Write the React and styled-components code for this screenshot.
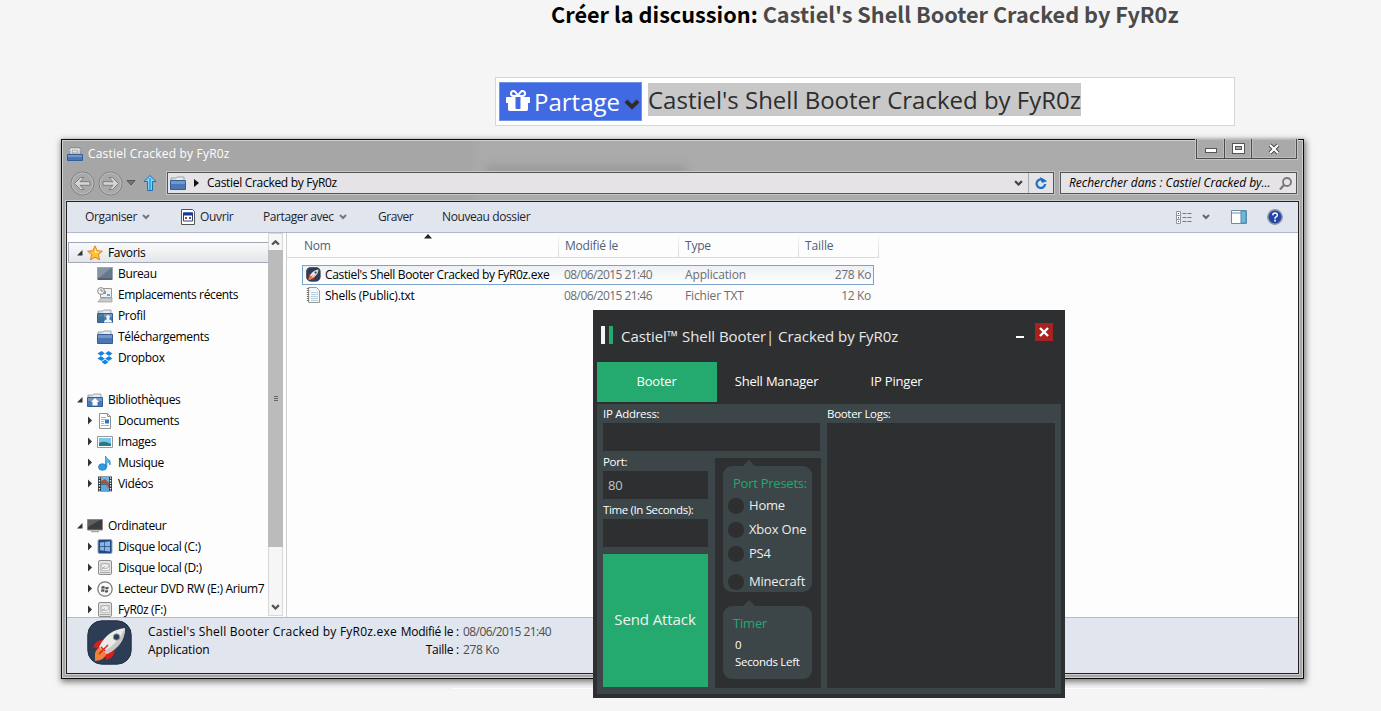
import React from "react";
import styled, { createGlobalStyle, css } from "styled-components";

const Global = createGlobalStyle`
  * { box-sizing: border-box; }
  html, body { margin: 0; padding: 0; }
  body {
    width: 1381px; height: 711px; overflow: hidden; background: #f5f5f5;
    font-family: "Open Sans", "Noto Sans", sans-serif; font-size: 12px; color: #000;
  }
  svg { display: block; flex: none; }
`;

const Desktop = styled.div`
  position: relative; width: 1381px; height: 711px; overflow: hidden; background: #f5f5f5;
`;
const Label = styled.span`
  white-space: pre; letter-spacing: ${(p) => p.$ls ?? -0.35}px;
  ${(p) => p.$size && css`font-size: ${p.$size}px;`}
  ${(p) => p.$up && css`margin-top: -2px;`}
`;

/* Forum page */
const Heading = styled.h1`
  margin: 0; padding-left: 551px; height: 77px; white-space: pre;
  font: 700 21.7px/27px "Noto Sans CJK JP", sans-serif; color: #000;
  span { color: #4a4a4a; }
`;
const TitleField = styled.div`
  margin-left: 495px; width: 740px; height: 49px; padding: 4px 3px; display: flex; align-items: flex-start;
  background: #fff; border: 1px solid #d6d6d6;
`;
const Tag = styled.div`
  width: 143px; height: 39px; display: flex; align-items: center; padding: 0 1px 0 6px;
  background: #4169e1; border: 1px solid #6f93e6; color: #fff; font-size: 24px;
  svg:first-child { margin-top: -1px; }
  svg:last-child { margin: 6px 0 0 auto; }
  span { margin-left: 4px; }
`;
const Selected = styled.span`
  margin: 1px 0 0 6px; width: 433px; height: 33px; line-height: 34px; background: #c8c8c8; color: #2d2d2d;
  font-size: 24px; white-space: pre;
`;
const PageRule = styled.div`
  position: absolute; left: 452px; top: 688px; width: 813px; height: 1px; background: #fff;
`;

/* Explorer */
const Explorer = styled.section`
  position: absolute; left: 61px; top: 139px; width: 1243px; height: 540px; padding: 0 4px 4px;
  display: flex; flex-direction: column; border: 1px solid #0c0c0c; background: #a6a6a6;
  box-shadow: inset 0 0 0 1px #cfcfcf, 1px 2px 6px 1px rgba(0,0,0,.5);
`;
const Glass = styled.div`
  position: absolute; left: 406px; top: 1px; right: 2px; height: 60px; overflow: hidden;
  background: linear-gradient(90deg, rgba(255,255,255,0), rgba(255,255,255,.05) 12px);
  &::after {
    content: ""; position: absolute; left: 18px; top: 25px; width: 200px; height: 8px;
    background: rgba(70,70,70,.2); filter: blur(4px);
  }
`;
const TitleBar = styled.header`
  position: relative; height: 27px; display: flex; align-items: center; gap: 5px; padding: 0 1px; color: #fff;
  flex: none;
`;
const Controls = styled.div`
  margin: -1px 1px 0 auto; align-self: flex-start; display: flex; height: 20px;
  border: 1px solid #4c4c4c; border-top: 0; box-shadow: 0 0 0 1px #c4c4c4; background: #a9a9a9;
`;
const Control = styled.div`
  width: ${(p) => p.$w}px; display: flex; align-items: center; justify-content: center;
  padding-top: ${(p) => p.$pt ?? 0}px;
  box-shadow: inset 0 0 0 1px #bdbdbd;
  & + & { border-left: 1px solid #4c4c4c; }
`;
const NavBar = styled.div`
  position: relative; height: 34px; display: flex; align-items: center; flex: none; padding: 0 2px 2px 4px;
`;
const NavButtons = styled.div`
  width: 97px; display: flex; align-items: center; gap: 3px;
  svg:nth-child(3) { margin-left: 0; }
  svg:nth-child(4) { margin-left: 4px; }
`;
const Box = styled.div`
  height: 22px; width: ${(p) => p.$w}px; display: flex; align-items: center; background: #e5e3e5;
  border: 1px solid #555; box-shadow: 0 0 0 1px #c6c6c6;
`;
const Address = styled(Box)`
  padding-left: 2px; gap: 8px; margin-right: 6px;
  > svg:nth-of-type(3) { margin-left: auto; margin-right: -3px; }
`;
const Refresh = styled.div`
  width: 25px; height: 20px; border-left: 1px solid #aaa; display: flex; align-items: center; justify-content: center;
`;
const Search = styled(Box)`
  padding: 0 4px 0 8px; justify-content: space-between; font-style: italic;
`;
const Client = styled.div`
  position: relative; flex: 1; min-height: 0; display: flex; flex-direction: column;
  border: 1px solid #222; box-shadow: 0 0 0 1px #cacaca; background: #fdfdfd;
`;
const Toolbar = styled.div`
  height: 31px; flex: none; display: flex; align-items: center; padding: 0 15px 0 18px; background: #e1e6ee;
  border-bottom: 1px solid #b2b8c6; color: #1e2430;
`;
const Tool = styled.div`
  width: ${(p) => p.$w}px; display: flex; align-items: center; gap: 5px;
`;
const Tools = styled.div`
  margin-left: auto; display: flex; align-items: center;
  svg:nth-child(2) { margin-left: 10px; }
  svg:nth-child(3) { margin-left: 21px; }
  svg:nth-child(4) { margin-left: 20px; }
`;
const Body = styled.div`
  height: 384px; flex: none; display: flex;
`;
const Tree = styled.nav`
  width: 201px; padding: 9px 0 0 1px; overflow: hidden;
`;
const TreeRow = styled.div`
  height: 21px; display: flex; align-items: center; padding-left: ${(p) => (p.$child ? 17 : 7)}px;
  overflow: hidden;
  margin-top: ${(p) => (p.$gap ? 21 : 0)}px;
  > svg:first-child { width: 9px; }
  > svg:nth-child(2) { margin: 0 5px 0 3px; }
  ${(p) => p.$active && css`
    border: 1px solid #a2a7b8; border-right: 0; padding-left: 6px;
    background: linear-gradient(#fafafb, #e4e6ea);
  `}
`;
const ScrollBar = styled.div`
  width: 15px; display: flex; flex-direction: column; margin-bottom: 1px; background: #f6f6f6; border: 1px solid #d8d8d8;
`;
const ScrollArrow = styled.div`
  height: 16px; display: flex; align-items: center; justify-content: center;
`;
const LastArrow = styled(ScrollArrow)` margin-top: auto; `;
const Thumb = styled.div`
  height: 297px; margin: 0 -1px; background: #bbb; display: flex; align-items: center; justify-content: center;
`;
const Files = styled.div`
  margin-left: 3px; flex: 1; border-left: 1px solid #d0d0d4;
`;
const Header = styled.div`
  position: relative; display: flex; width: 592px; height: 25px; border-bottom: 1px solid #dcdce0; color: #4c607a;
`;
const HeaderCell = styled.div`
  width: ${(p) => p.$w}px; padding-left: ${(p) => p.$pl ?? 6}px; line-height: 26px;
  border-right: 1px solid; border-image: linear-gradient(#fdfdfd, #d6d6da) 1;
`;
const SortMark = styled.svg`
  position: absolute; left: 137px; top: 1px;
`;
const FileRow = styled.div`
  width: 572px; height: ${(p) => (p.$active ? 20 : 22)}px; margin-left: 15px; display: flex; align-items: center;
  padding: 0 2px 0 3px; border: 1px solid transparent; color: #6d6d6d;
  ${(p) => p.$active && css`
    margin-top: 7px; border-color: #7da2ce; background: linear-gradient(#edf0f5, #fff);
  `}
`;
const FileName = styled.div`
  width: 258px; display: flex; gap: 4px; align-items: center; color: #000;
  svg { margin-top: -2px; }
`;
const FileCell = styled.div`
  width: ${(p) => p.$w}px; text-align: ${(p) => p.$align ?? "left"}; white-space: nowrap; margin-top: -2px;
`;
const Details = styled.footer`
  flex: 1; display: flex; background: #e1e5ee; border-top: 1px solid #b7bac6; padding: 2px 0 0 20px;
`;
const DetailColumn = styled.div`
  width: ${(p) => p.$w}px; line-height: 18px; padding-top: 3px; text-align: ${(p) => p.$align}; white-space: nowrap;
  margin-left: ${(p) => p.$ml ?? 0}px; color: ${(p) => p.$c ?? "#000"};
  span { display: block; }
`;

/* Booter window */
const Booter = styled.section`
  position: absolute; left: 593px; top: 310px; width: 472px; height: 388px; padding: 0 4px;
  background: #2e2f31; color: #fff;
`;
const BooterTitle = styled.header`
  height: 52px; display: flex; align-items: flex-start; padding: 13px 8px 0 4px; color: #e8e8e8; line-height: 26px;
`;
const Stripe = styled.i`
  width: 4px; height: 18px; margin: 3px 4px 0 0; background: ${(p) => p.$c};
`;
const BooterName = styled(Label)` margin-left: 4px; font-size: 15px; `;
const Minimize = styled.i`
  width: 8px; height: 2px; margin: 13px 11px 0 auto; background: #fff;
`;
const Close = styled.div`
  width: 18px; height: 18px; background: #a82222; display: flex; align-items: center; justify-content: center;
`;
const Tabs = styled.div` display: flex; height: 42px; `;
const Tab = styled.div`
  width: 120px; height: 40px; line-height: 39px; text-align: center; padding-right: 1px;
  background: ${(p) => (p.$active ? "#24a96e" : "transparent")};
`;
const Panel = styled.div`
  height: 290px; padding: 0 6px; display: flex; gap: 7px; background: #3c4547;
`;
const FormColumn = styled.div` width: 217px; `;
const LogColumn = styled.div` width: 228px; `;
const Split = styled.div` display: flex; gap: 7px; `;
const Fields = styled.div` width: 105px; flex: none; `;
const FieldLabel = styled.div` height: ${(p) => p.$h ?? 20}px; line-height: ${(p) => (p.$h ? 20 : 21)}px; white-space: nowrap; `;
const Input = styled.div`
  height: ${(p) => p.$h ?? 28}px; padding-left: 5px; line-height: 28px; background: #2e2f31; color: #c4c4c4;
`;
const Send = styled.button`
  display: block; width: 105px; height: 133px; margin: 7px 0 0; padding: 0 1px 3px 0; border: 0; background: #24a96e;
  color: #f2f2f2; font: 15px "Open Sans", sans-serif;
`;
const Group = styled.div`
  flex: none; width: 106px; height: 230px; margin-top: 7px; padding: 8px; background: #2e2f31;
`;
const Card = styled.div`
  position: relative; width: 89px; height: ${(p) => p.$h}px; margin-bottom: 14px; border-radius: 9px; background: #3c4547;
  padding: 8px 0 0 5px;
  &::before {
    content: ""; position: absolute; left: 20px; top: -6px;
    border: 6px solid transparent; border-top: 0; border-bottom-color: #3c4547;
  }
`;
const CardTitle = styled.div`
  margin-left: 5px; height: 18px; line-height: 19px; color: #24a96e; white-space: nowrap;
`;
const Radio = styled.div`
  display: flex; align-items: center; gap: 5px; height: 17px; margin-top: ${(p) => p.$mt}px; color: #ececec;
  white-space: nowrap;
  &::before { content: ""; flex: none; width: 16px; height: 16px; border-radius: 50%; background: #2e2f31; }
`;
const TimerLine = styled.div`
  margin: ${(p) => p.$mt ?? 0}px 0 0 7px; height: 17px; line-height: 17px; white-space: nowrap;
`;
const Field = (p) => <Label $size={11.5} $ls={-0.3} {...p} />;
const Text13 = (p) => <Label $size={13} $ls={-0.2} {...p} />;

/* Icons */
const Gift = () => (
  <svg width="24" height="28" viewBox="0 0 1536 1792">
    <path fill="#fff" d="M928 1356v-716h-320v716q0 25 18 38.500t46 13.500h192q28 0 46-13.500t18-38.500zm-456-844h195l-126-161q-26-31-69-31-40 0-68 28t-28 68 28 68 68 28zm688-96q0-40-28-68t-68-28q-43 0-69 31l-125 161h194q40 0 68-28t28-68zm376 256v320q0 14-9 23t-23 9h-96v416q0 40-28 68t-68 28h-1088q-40 0-68-28t-28-68v-416h-96q-14 0-23-9t-9-23v-320q0-14 9-23t23-9h440q-93 0-158.500-65.500t-65.500-158.500 65.500-158.500 158.500-65.500q107 0 168 77l128 165 128-165q61-77 168-77 93 0 158.500 65.500t65.500 158.500-65.500 158.500-158.500 65.500h440q14 0 23 9t9 23z" />
  </svg>
);
const Chevron = ({ w = 8, c = "#666", up, s = 2 }) => (
  <svg width={w} height={w * 0.75} viewBox="0 0 8 6">
    <path d={up ? "M1 5l3-3 3 3" : "M1 1l3 3 3-3"} fill="none" stroke={c} strokeWidth={s} />
  </svg>
);
const Folder = ({ children, doc }) => (
  <svg width="16" height="14" viewBox="0 0 16 14">
    <path d="M1 4V2h5l1-1h7v4z" fill="#e8ebee" stroke="#8b939c" strokeWidth=".8" />
    {doc && <path d="M3 1h10v6H3z" fill="#fff" stroke="#777" strokeWidth=".7" />}
    {doc && <path d="M5 3h6v3H5z" fill="#ddd" stroke="#888" strokeWidth=".7" />}
    <path d={doc ? "M.5 7.500h15v6H.5z" : "M.5 4.500h15v9H.5z"} fill="#4a78b4" stroke="#365e96" />
    <path d={doc ? "M1 8h14v2H1z" : "M1 5h14v3H1z"} fill="#7499c8" />
    {children}
  </svg>
);
const RoundArrow = ({ flip }) => (
  <svg width="25" height="25" viewBox="0 0 25 25">
    <circle cx="12.500" cy="12.500" r="11.500" fill="#a9a9a9" stroke="#808080" />
    <circle cx="12.500" cy="12.500" r="10.500" fill="none" stroke="#bdbdbd" />
    <path transform={flip ? "translate(25 0) scale(-1 1)" : undefined}
      d="M4.500 12.500l6-6h3.500l-4 4.200h10v3.600H10l4 4.200h-3.500z" fill="#d4d4d4" stroke="#777" strokeWidth=".9" />
  </svg>
);
const UpArrow = () => (
  <svg width="14" height="18" viewBox="0 0 14 18">
    <path d="M7 1.500l6 6H9.500v9h-5v-9H1z" fill="#7ed3f7" stroke="#1f6fa8" />
    <path d="M7 4v12" stroke="#2e9de0" strokeWidth="1.500" />
  </svg>
);
const Expand = ({ open }) => (
  <svg width="9" height="9" viewBox="0 0 9 9">
    {open ? <path d="M7.500 2v5.500H2z" fill="#333" /> : <path d="M3 .5v8l4-4z" fill="#333" />}
  </svg>
);
const Rocket = ({ size }) => (
  <svg width={size} height={size} viewBox="0 0 46 46">
    <rect x=".8" y=".8" width="43.400" height="43.400" rx="14" fill="#2c3d55" stroke="#223044" />
    <path d="M6 27q3-8 12-7l-6 9zM19 40l-1-8 9-6q2 8-3 12z" fill="#d81f1f" />
    <path d="M8 38q-1-9 6-11l6 6q-2 7-12 8z" fill="#f0803c" />
    <path d="M12 27Q20 10 38 8q0 17-18 26z" fill="#eceae8" />
    <path d="M38 8q0 17-18 26l-3-3Q31 24 38 8z" fill="#c9c6c6" />
    <circle cx="29.500" cy="17" r="3.200" fill="#2c3d55" stroke="#8a97a8" />
    <path d="M12 34l9-9M14 27l4 4" stroke="#d81f1f" strokeWidth="1.400" />
  </svg>
);
const icons = {
  star: <svg width="16" height="16" viewBox="0 0 16 16"><path d="M8 .8l2.100 4.900 5.300.5-4 3.500 1.200 5.200L8 12.200l-4.600 2.700 1.200-5.200-4-3.500 5.300-.5z" fill="#fdc13c" stroke="#e08424" /><path d="M8 3l1.300 3.500L13 7l-5 1z" fill="#fff0a8" /></svg>,
  desk: <svg width="16" height="14" viewBox="0 0 16 14"><path d="M.5.5h15v12H.5z" fill="#65788c" stroke="#9aa6b2" /><path d="M1 1h13L3 10H1z" fill="#8494a4" /><path d="M1 11h14v2H1z" fill="#56616c" /></svg>,
  recent: <svg width="16" height="16" viewBox="0 0 16 16"><path d="M3.500 1.500h11v9h-11z" fill="#eef1f3" stroke="#999" /><path d="M6 4h3v3H6zM10 7h3v2h-3z" fill="#5aa7dc" /><path d="M1 15l3-4h11v4z" fill="#c9cbcc" stroke="#999" strokeWidth=".7" /><circle cx="4" cy="4" r="3.400" fill="#f5f5f5" stroke="#888" /><path d="M4 2v2h2" stroke="#666" fill="none" strokeWidth=".8" /></svg>,
  profile: <Folder><path d="M1 5h6v8H1z" fill="#376f8c" opacity=".7" /><path d="M7 13.500v-1q1-2 3-2.200Q9 9 9.200 7.500 9.500 6 11 6t1.800 1.500Q13 9 12 10.300q2 .2 3 2.200v1z" fill="#f0f3f5" /></Folder>,
  folder: <Folder />,
  dropbox: <svg width="16" height="14" viewBox="0 0 16 14"><path d="M4.500 0L8 2.500 4 5 .5 2.500zM11.500 0L8 2.500 12 5l3.500-2.500zM.5 7.500L4 5l4 2.500L4.500 10zM15.500 7.500L12 5 8 7.500l3.500 2.500zM4.500 11L8 8.500l3.500 2.500L8 13.500z" fill="#1683e0" /><path d="M4 5l4-2.500L12 5 8 7.500z" fill="#fdfdfd" /></svg>,
  library: <Folder><path d="M8 5l4 4h-1.500v3.500h-5V9H4z" fill="#fff" /></Folder>,
  doc: <svg width="16" height="16" viewBox="0 0 16 16"><path d="M2.500.5h8l3 3v12h-11z" fill="#fff" stroke="#8c9298" /><path d="M10.500.5v3h3" fill="none" stroke="#8c9298" /><path d="M4 4.500h5M4 6.500h8M4 8.500h3M4 10.500h3M4 12.500h8" stroke="#9bb" /><path d="M8 7h4v3.500H8z" fill="#2878c8" /></svg>,
  image: <svg width="16" height="14" viewBox="0 0 16 14"><path d="M.5 1.500h15v11H.5z" fill="#fff" stroke="#999" /><path d="M2 3h12v8H2z" fill="#7cc6ee" /><path d="M2 8q5-3 12 1v2H2z" fill="#25806e" /><path d="M2 9.500h12V11H2z" fill="#2777a8" /></svg>,
  music: <svg width="16" height="16" viewBox="0 0 16 16"><ellipse cx="5.500" cy="12" rx="4" ry="3.300" fill="#2e9be4" stroke="#1f74b8" strokeWidth=".7" /><path d="M8.500 12V1q1 3 4 4 1.500 2 .5 5-.5-3-3-3.500V12z" fill="#55b4ee" stroke="#1f74b8" strokeWidth=".6" /></svg>,
  video: <svg width="16" height="16" viewBox="0 0 16 16"><path d="M1 .5h14v15H1z" fill="#2e3a44" /><path d="M4 1h8v6.500H4z" fill="#67b7e6" /><path d="M4 8.500h8V15H4z" fill="#5ba8e0" /><path d="M4 5l4-2 4 4v.5H4zM9 8.500h3v4z" fill="#a65438" /><path d="M2.500 1.500v14M13.500 1.500v14" stroke="#fff" strokeWidth="1.300" strokeDasharray="1.300 1.300" /></svg>,
  computer: <svg width="16" height="14" viewBox="0 0 16 14"><path d="M.5.5h15v10.500H.5z" fill="#3a3d40" stroke="#888" /><path d="M1 1h12L1 8z" fill="#5c6063" /><path d="M4 12.500h8" stroke="#aaa" strokeWidth="1.600" /></svg>,
  windows: <svg width="16" height="15" viewBox="0 0 16 15"><rect x="1" y=".5" width="14" height="14" rx="1.500" fill="#1f4a86" stroke="#8ea5c0" /><path d="M3 3.600l4.300-.6V7H3zM8 2.900l5-.7V7H8zM3 7.700h4.300v4.100L3 11.200zM8 7.700h5v4.900L8 12z" fill="#8fb2da" /></svg>,
  disk: <svg width="16" height="15" viewBox="0 0 16 15"><rect x="1.500" y=".5" width="13" height="14" rx="1.500" fill="#e4e4e4" stroke="#8d8d8d" /><path d="M3.500 3.500h9v7h-9z" fill="#f0f0f0" stroke="#b4b4b4" strokeWidth=".7" /><ellipse cx="8" cy="6" rx="4" ry="2.500" fill="none" stroke="#aaa" strokeWidth=".8" /><path d="M4 9.500l4-3M3 12.500h10" stroke="#999" strokeWidth=".8" /></svg>,
  dvd: <svg width="16" height="16" viewBox="0 0 16 16"><circle cx="8" cy="8" r="7.200" fill="#fafafa" stroke="#777" strokeWidth="1.200" /><path d="M4.500 5.500q2-1 3.200 0v2.300q-1.500-.8-3.500 0zM8.500 5.800q1.500.8 3.300 0l-.5 2.300q-1.500.8-3 0zM4.200 8.600q1.800-.8 3.300 0l-.3 2.300q-1.500-.8-3 0zM8.300 8.900q1.500.8 3 0l-.4 2.300q-1.500.8-3 0z" fill="#555" /></svg>,
  exe: <svg width="14" height="16" viewBox="0 0 14 16"><path d="M.5.5h11l2 2v13H.5z" fill="#fff" stroke="#555" /><path d="M2.500 4h9v8h-9z" fill="#fff" stroke="#345" /><path d="M2 3.500h10v3H2z" fill="#123a9c" /><path d="M4 8h2v2H4z" fill="#c33" /><path d="M8 8h2v2H8z" fill="#2a58c8" /></svg>,
  txt: <svg width="15" height="16" viewBox="0 0 15 16"><path d="M2.500.5h8l3 3v12h-11z" fill="#f5f7f8" stroke="#999" /><path d="M5 5.500h7M5 7.500h7M5 9.500h7M5 11.500h7M5 13.500h7" stroke="#b9d3e3" /><path d="M2 1v14" stroke="#777" strokeWidth="2.400" strokeDasharray="1 1" /></svg>,
};

const tree = [
  ["star", "Favoris", 0],
  ["desk", "Bureau", 1], ["recent", "Emplacements récents", 1], ["profile", "Profil", 1],
  ["folder", "Téléchargements", 1], ["dropbox", "Dropbox", 1],
  ["library", "Bibliothèques", 0], ["doc", "Documents", 2], ["image", "Images", 2],
  ["music", "Musique", 2], ["video", "Vidéos", 2],
  ["computer", "Ordinateur", 0], ["windows", "Disque local (C:)", 2], ["disk", "Disque local (D:)", 2],
  ["dvd", "Lecteur DVD RW (E:) Arium7", 2], ["disk", "FyR0z (F:)", 2],
];

export default function App() {
  return (
    <Desktop>
      <Global />
      <Heading>Créer la discussion: <span>Castiel's Shell Booter Cracked by FyR0z</span></Heading>
      <TitleField>
        <Tag><Gift /><Label $ls={0}>Partage</Label><Chevron w={16} c="#2d2d2d" /></Tag>
        <Selected>Castiel's Shell Booter Cracked by FyR0z</Selected>
      </TitleField>
      <PageRule />

      <Explorer>
        <Glass />
        <TitleBar>
          <Folder doc />
          <Label $ls={0.19}>Castiel Cracked by FyR0z</Label>
          <Controls>
            <Control $w={27} $pt={4}><svg width="12" height="6"><rect x=".5" y=".5" width="11" height="4" fill="#fff" stroke="#555" /></svg></Control>
            <Control $w={27}><svg width="13" height="11"><rect x=".5" y=".5" width="12" height="10" fill="#fff" stroke="#555" /><rect x="3.500" y="3.500" width="6" height="3" fill="#aaa" stroke="#555" /></svg></Control>
            <Control $w={45}><svg width="12" height="12"><path d="M2 2l8 8M10 2l-8 8" stroke="#444" strokeWidth="4" /><path d="M2 2l8 8M10 2l-8 8" stroke="#fff" strokeWidth="2.200" /></svg></Control>
          </Controls>
        </TitleBar>
        <NavBar>
          <NavButtons>
            <RoundArrow /><RoundArrow flip />
            <svg width="10" height="6"><path d="M1 .5h8l-4 4.500z" fill="#777" stroke="#555" /></svg>
            <UpArrow />
          </NavButtons>
          <Address $w={887}>
            <Folder />
            <svg width="5" height="8"><path d="M0 0v8l5-4z" fill="#111" /></svg>
            <Label $up $ls={-0.3}>Castiel Cracked by FyR0z</Label>
            <Chevron w={9} c="#444" />
            <Refresh>
              <svg width="12" height="14" viewBox="0 0 12 14"><path d="M9 4.600A4.300 4.300 0 1 0 10.200 8" fill="none" stroke="#1c6fc8" strokeWidth="2.200" /><path d="M6 0v6.500h5.500z" fill="#1c6fc8" transform="rotate(-20 8 4)" /></svg>
            </Refresh>
          </Address>
          <Search $w={237}>
            <Label $up $ls={-0.03}>Rechercher dans : Castiel Cracked by...</Label>
            <svg width="13" height="13" viewBox="0 0 13 13"><circle cx="8" cy="5" r="4" fill="none" stroke="#777" strokeWidth="1.800" /><path d="M5 8l-4 4.500" stroke="#777" strokeWidth="2.200" /></svg>
          </Search>
        </NavBar>

        <Client>
          <Toolbar>
            <Tool $w={96}><Label $up>Organiser</Label><Chevron c="#777" /></Tool>
            <Tool $w={82}>{icons.exe}<Label $up>Ouvrir</Label></Tool>
            <Tool $w={115}><Label $up $ls={-0.42}>Partager avec</Label><Chevron c="#777" /></Tool>
            <Tool $w={64}><Label $up $ls={-0.45}>Graver</Label></Tool>
            <Tool $w={100}><Label $up $ls={-0.4}>Nouveau dossier</Label></Tool>
            <Tools>
              <svg width="16" height="13" viewBox="0 0 16 13">
                <path d="M.5.500h4v12h-4zM.5 4.500h4M.5 8.500h4" fill="#fff" stroke="#8a97a8" />
                <path d="M2 6h1v1.500H2z" fill="#d22" /><path d="M2 2h1v1H2zM2 10h1v1H2z" fill="#258" />
                <path d="M6.500 2.500h9M6.500 6.500h9M6.500 10.500h9" stroke="#6a7c90" strokeDasharray="4 1" />
              </svg>
              <Chevron c="#666" />
              <svg width="16" height="14" viewBox="0 0 16 14"><path d="M.5.500h15v13H.5z" fill="#fff" stroke="#6b8aa8" /><path d="M1 3h9" stroke="#6b8aa8" /><path d="M10 1h5v12h-5z" fill="#6db8d8" stroke="#4a8cb0" /></svg>
              <svg width="16" height="16" viewBox="0 0 16 16"><circle cx="8" cy="8" r="7.200" fill="#2446a8" stroke="#8f97a8" strokeWidth="1.500" /><path d="M5.800 6.300q0-2.300 2.300-2.300t2.200 2q0 1.200-1.200 1.900T8 9.700" fill="none" stroke="#fff" strokeWidth="1.500" /><path d="M7.200 10.800h1.700v1.600H7.200z" fill="#fff" /></svg>
            </Tools>
          </Toolbar>

          <Body>
            <Tree>
              {tree.map(([icon, text, kind], i) => (
                <TreeRow key={text} $child={kind > 0} $gap={kind === 0 && i > 0} $active={i === 0}>
                  {kind === 1 ? <svg width="9" height="9" /> : <Expand open={kind === 0} />}
                  {icons[icon]}
                  <Label>{text}</Label>
                </TreeRow>
              ))}
            </Tree>
            <ScrollBar>
              <ScrollArrow><Chevron w={9} c="#555" up /></ScrollArrow>
              <Thumb><svg width="4" height="6"><path d="M0 .5h4M0 2.500h4M0 4.500h4" stroke="#666" /></svg></Thumb>
              <LastArrow><Chevron w={9} c="#555" /></LastArrow>
            </ScrollBar>
            <Files>
              <Header>
                <SortMark width="8" height="5"><path d="M0 4.500L4 0l4 4.500z" fill="#222" /></SortMark>
                <HeaderCell $w={272} $pl={17}><Label $ls={-0.2}>Nom</Label></HeaderCell>
                <HeaderCell $w={120}><Label $ls={-0.2}>Modifié le</Label></HeaderCell>
                <HeaderCell $w={120}><Label $ls={-0.2}>Type</Label></HeaderCell>
                <HeaderCell $w={80}><Label $ls={-0.1}>Taille</Label></HeaderCell>
              </Header>
              <FileRow $active>
                <FileName><Rocket size={15} /><Label $up>Castiel's Shell Booter Cracked by FyR0z.exe</Label></FileName>
                <FileCell $w={121}><Label $ls={-0.58}>08/06/2015 21:40</Label></FileCell>
                <FileCell $w={120}><Label $ls={-0.15}>Application</Label></FileCell>
                <FileCell $w={66} $align="right"><Label>278 Ko</Label></FileCell>
              </FileRow>
              <FileRow>
                <FileName>{icons.txt}<Label $up $ls={-0.25}>Shells (Public).txt</Label></FileName>
                <FileCell $w={121}><Label $ls={-0.58}>08/06/2015 21:46</Label></FileCell>
                <FileCell $w={120}><Label $ls={-0.15}>Fichier TXT</Label></FileCell>
                <FileCell $w={66} $align="right"><Label>12 Ko</Label></FileCell>
              </FileRow>
            </Files>
          </Body>

          <Details>
            <Rocket size={46} />
            <DetailColumn $w={250} $ml={15} $align="left">
              <Label $ls={0.22}>Castiel's Shell Booter Cracked by FyR0z.exe</Label>
              <Label $ls={-0.1}>Application</Label>
            </DetailColumn>
            <DetailColumn $w={61} $align="right">
              <Label $ls={-0.25}>Modifié le :</Label>
              <Label $ls={-0.25}>Taille :</Label>
            </DetailColumn>
            <DetailColumn $w={120} $ml={4} $align="left" $c="#4d4d4d">
              <Label $ls={-0.58}>08/06/2015 21:40</Label>
              <Label>278 Ko</Label>
            </DetailColumn>
          </Details>
        </Client>
      </Explorer>

      <Booter>
        <BooterTitle>
          <Stripe $c="#f4f4f4" /><Stripe $c="#24a96e" />
          <BooterName $ls={-0.07}>Castiel™ Shell Booter| Cracked by FyR0z</BooterName>
          <Minimize />
          <Close><svg width="10" height="10"><path d="M1 1l8 8M9 1l-8 8" stroke="#fff" strokeWidth="2.400" /></svg></Close>
        </BooterTitle>
        <Tabs>
          <Tab $active><Text13>Booter</Text13></Tab>
          <Tab><Text13>Shell Manager</Text13></Tab>
          <Tab><Text13>IP Pinger</Text13></Tab>
        </Tabs>
        <Panel>
          <FormColumn>
            <FieldLabel $h={19}><Field>IP Address:</Field></FieldLabel>
            <Input />
            <Split>
              <Fields>
                <FieldLabel><Field>Port:</Field></FieldLabel>
                <Input><Text13>80</Text13></Input>
                <FieldLabel><Field $ls={-0.37}>Time (In Seconds):</Field></FieldLabel>
                <Input />
                <Send><Label $ls={-0.1}>Send Attack</Label></Send>
              </Fields>
              <Group>
                <Card $h={126}>
                  <CardTitle><Text13 $ls={-0.25}>Port Presets:</Text13></CardTitle>
                  <Radio $mt={5}><Text13 $up>Home</Text13></Radio>
                  <Radio $mt={7}><Text13 $up>Xbox One</Text13></Radio>
                  <Radio $mt={7}><Text13 $up>PS4</Text13></Radio>
                  <Radio $mt={11}><Text13 $up>Minecraft</Text13></Radio>
                </Card>
                <Card $h={73}>
                  <CardTitle><Text13>Timer</Text13></CardTitle>
                  <TimerLine $mt={4}><Field>0</Field></TimerLine>
                  <TimerLine><Field>Seconds Left</Field></TimerLine>
                </Card>
              </Group>
            </Split>
          </FormColumn>
          <LogColumn>
            <FieldLabel $h={19}><Field>Booter Logs:</Field></FieldLabel>
            <Input $h={265} />
          </LogColumn>
        </Panel>
      </Booter>
    </Desktop>
  );
}
